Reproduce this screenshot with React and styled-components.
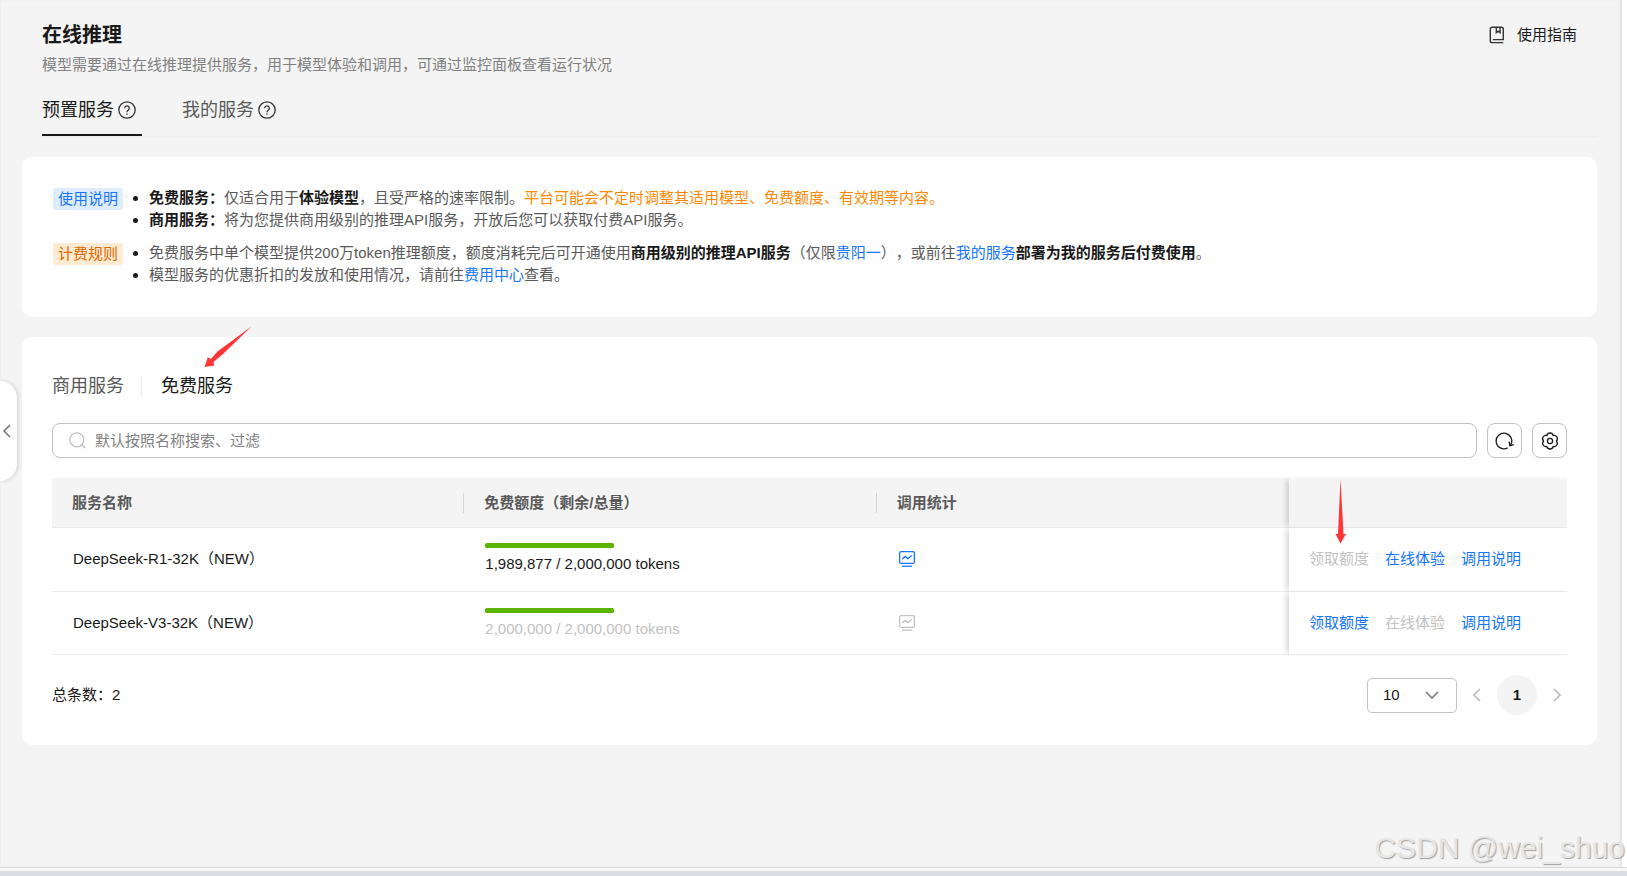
import React, { useState } from "react"
import styled, { createGlobalStyle } from "styled-components"

const GlobalStyle = createGlobalStyle`
  * {
    box-sizing: border-box;
  }

  body {
    margin: 0;
    background: #f4f4f4;
    color: #191919;
    font-family: "Liberation Sans", "Noto Sans CJK SC", sans-serif;
    font-size: 15px;
    line-height: 22px;
    text-spacing-trim: space-all;
  }

  button,
  input,
  select {
    font: inherit;
    color: inherit;
  }
`

const StyledPage = styled.div`
  position: relative;
  display: flex;
  flex-direction: column;
  min-height: 100vh;

  .body {
    flex: 1;
    display: flex;
  }
`

const Main = styled.main`
  flex: 1;
  min-width: 0;
  padding: 21px 25px 20px 21px;
  border-left: 1px solid #eeeeee;
  box-shadow: inset -3px 0 3px -1px #e2e2e2;
`

const Gutter = styled.div`
  width: 5px;
  background: #ffffff;
`

const BottomEdge = styled.div`
  height: 9px;
  border-top: 1px solid #d9d9d9;
  border-bottom: 5px solid #dcdde3;
  background: #f7f7f7;
`

const Header = styled.header`
  padding-left: 20px;

  .top {
    display: flex;
    justify-content: space-between;
    align-items: center;
    padding-right: 20px;
  }

  h1 {
    margin: 0;
    font-size: 20px;
    line-height: 28px;
  }

  p {
    margin: 5px 0 0;
    color: #808080;
  }
`

const GuideLink = styled.a`
  display: flex;
  align-items: center;
  gap: 12px;
  color: #191919;
  text-decoration: none;
`

const PageTabs = styled.nav`
  display: flex;
  gap: 40px;
  margin-top: 10px;
  border-bottom: 1px solid #eeeeee;
`

const PageTab = styled.button`
  display: flex;
  align-items: center;
  gap: 4px;
  height: 50px;
  padding: 0 6px 0 0;
  border: 0;
  border-bottom: 2px solid ${(props) => (props.$active ? "#191919" : "transparent")};
  background: none;
  color: ${(props) => (props.$active ? "#191919" : "#595959")};
  font-size: 18px;

  svg {
    color: #333333;
  }
`

const Card = styled.section`
  margin-top: 20px;
  padding: 30px 30px 31px;
  border-radius: 10px;
  background: #ffffff;

  & + & {
    padding-bottom: 30px;
  }
`

const Notice = styled.div`
  display: flex;
  align-items: flex-start;
  gap: 11px;
  padding-left: 1px;

  & + & {
    margin-top: 11px;
  }

  ul {
    margin: 0;
    padding-left: 15px;
    color: #595959;
  }

  li::marker {
    color: #191919;
  }

  strong {
    color: #191919;
  }

  .warn {
    color: #ff8800;
  }
`

const Tag = styled.span`
  flex: none;
  margin-top: 1px;
  padding: 0 5px;
  border-radius: 3px;
  color: ${(props) => (props.$tone === "blue" ? "#1476ff" : "#db6a00")};
  background: ${(props) => (props.$tone === "blue" ? "#deecff" : "#ffebd1")};
`

const TextLink = styled.a`
  color: #1476ff;
  text-decoration: none;
`

const ServiceTabs = styled.div`
  display: flex;
  align-items: center;
  height: 38px;
`

const ServiceTab = styled.button`
  padding: 0;
  border: 0;
  background: none;
  font-size: 18px;
  color: ${(props) => (props.$active ? "#191919" : "#595959")};

  & + & {
    margin-left: 17px;
    padding-left: 20px;
    background: linear-gradient(#ebebeb, #ebebeb) left / 1px 20px no-repeat;
  }
`

const Toolbar = styled.div`
  display: flex;
  gap: 10px;
  margin-top: 18px;
`

const SearchBox = styled.label`
  flex: 1;
  display: flex;
  align-items: center;
  gap: 9px;
  height: 35px;
  padding: 0 16px;
  border: 1px solid #c2c2c2;
  border-radius: 8px;

  input {
    flex: 1;
    padding: 0;
    border: 0;
    outline: 0;
    background: none;
  }

  input::placeholder {
    color: #808080;
    opacity: 1;
  }
`

const IconButton = styled.button`
  display: flex;
  align-items: center;
  justify-content: center;
  width: 35px;
  height: 35px;
  padding: 0;
  border: 1px solid #c2c2c2;
  border-radius: 8px;
  background: #ffffff;
`

const ServiceTable = styled.table`
  width: 100%;
  margin-top: 20px;
  border-collapse: separate;
  border-spacing: 0;
  table-layout: fixed;

  th,
  td {
    border-bottom: 1px solid #ebebeb;
    text-align: left;
  }

  th {
    height: 50px;
    padding: 0 20px;
    background: #f4f4f4;
    color: #595959;
  }

  th.split {
    background: linear-gradient(#d6d6d6, #d6d6d6) right / 1px 20px no-repeat #f4f4f4;
  }

  td {
    height: 64px;
    padding: 0 21px 2px;
  }

  tr:last-child td {
    height: 63px;
    padding-bottom: 0;
  }

  .actions {
    width: 278px;
    padding-left: 20px;
    padding-right: 20px;
    box-shadow: -5px 0 5px -2px rgba(0, 0, 0, 0.15);
  }

  td.actions {
    background: #ffffff;
  }
`

const Quota = styled.div`
  color: ${(props) => (props.$muted ? "#c2c2c2" : "#191919")};

  progress {
    display: block;
    width: 129px;
    height: 5px;
    margin: 1px 0 5px;
    appearance: none;
    border: 0;
  }

  progress::-webkit-progress-bar {
    border-radius: 3px;
    background: #5cb300;
  }

  progress::-webkit-progress-value {
    border-radius: 3px;
    background: #5cb300;
  }
`

const StatButton = styled.button`
  display: flex;
  padding: 0;
  border: 0;
  background: none;
  color: #1476ff;

  &:disabled {
    color: #c2c2c2;
  }
`

const Actions = styled.div`
  display: flex;
  gap: 16px;

  button {
    padding: 0;
    border: 0;
    background: none;
    color: #1476ff;
  }

  button:disabled {
    color: #c2c2c2;
  }
`

const Footer = styled.div`
  display: flex;
  justify-content: space-between;
  align-items: center;
  margin-top: 20px;
`

const Pager = styled.div`
  display: flex;
  align-items: center;
`

const PageSize = styled.label`
  display: grid;
  align-items: center;
  margin-right: 10px;

  select {
    grid-area: 1 / 1;
    width: 90px;
    height: 35px;
    padding: 0 15px;
    appearance: none;
    border: 1px solid #c2c2c2;
    border-radius: 5px;
    background: #ffffff;
  }

  svg {
    grid-area: 1 / 1;
    justify-self: end;
    margin-right: 18px;
    color: #777777;
    pointer-events: none;
  }
`

const PageButton = styled.button`
  display: flex;
  align-items: center;
  justify-content: center;
  width: ${(props) => (props.$current ? "40px" : "20px")};
  height: 40px;
  padding: 0;
  border: 0;
  border-radius: 20px;
  background: ${(props) => (props.$current ? "#f4f4f4" : "none")};
  font-weight: bold;

  & + & {
    margin-left: 10px;
  }

  svg {
    color: #bbbbbb;
  }
`

const CollapseHandle = styled.button`
  position: absolute;
  left: 0;
  top: 381px;
  display: flex;
  align-items: center;
  width: 17px;
  height: 100px;
  padding: 0 2px;
  border: 0;
  border-radius: 0 17px 17px 0;
  background: #ffffff;
  box-shadow: 1px 0 4px rgba(0, 0, 0, 0.15);
  color: #777777;
`

const Arrow = styled.svg`
  position: absolute;
  left: ${(props) => props.$left};
  top: ${(props) => props.$top};
  fill: #fe3636;
  pointer-events: none;
`

const Watermark = styled.div`
  position: absolute;
  right: 2px;
  bottom: 10px;
  color: #e6e6e6;
  font-size: 30px;
  line-height: 36px;
  text-shadow: 1px 1px 1px #a0a0a0;
  pointer-events: none;
`

const HelpIcon = () => (
  <svg width="18" height="18" viewBox="0 0 18 18" fill="none" stroke="currentColor" strokeWidth="1.3">
    <circle cx="9" cy="9" r="8.2" />
    <path d="M6.7 7.2a2.3 2.3 0 1 1 3.7 1.8c-.8.6-1.4.9-1.4 1.9v.3" />
    <path d="M9 12.4v1.3" />
  </svg>
)

const BookIcon = () => (
  <svg width="16" height="18" viewBox="0 0 16 18" fill="none" stroke="#333333" strokeWidth="1.4">
    <path d="M14.3 16.6H3.2a1.9 1.9 0 0 1-1.9-1.9V3.2c0-1.1.8-1.9 1.9-1.9h9.2c1.1 0 1.9.8 1.9 1.9v10.4H3.8" />
    <path d="M7.3 1.5v5l1.9-1.4 1.9 1.4v-5" />
  </svg>
)

const SearchIcon = () => (
  <svg width="17" height="17" viewBox="0 0 17 17" fill="none" stroke="#bfbfbf" strokeWidth="1.3">
    <circle cx="7.8" cy="7.8" r="7" />
    <path d="M12.8 12.8l3.6 3.4" />
  </svg>
)

const RefreshIcon = () => (
  <svg width="19" height="18" viewBox="0 0 19 18" fill="none" stroke="#191919" strokeWidth="1.3">
    <path d="M12.6 15.9A7.8 7.8 0 1 1 15.6 13.1" />
    <path d="M14.2 9.6l.6 4 4-.9" />
  </svg>
)

const GearIcon = () => (
  <svg width="18" height="18" viewBox="0 0 18 18" fill="none" stroke="#191919" strokeWidth="1.3">
    <path
      d="M15.4 9A3.3 3.3 0 0 0 12.2 3.5 3.3 3.3 0 0 0 5.8 3.5 3.3 3.3 0 0 0 2.6 9 3.3 3.3 0 0 0 5.8 14.5 3.3 3.3 0 0 0 12.2 14.5 3.3 3.3 0 0 0 15.4 9z"
      strokeLinejoin="round"
    />
    <circle cx="9" cy="9" r="2.6" />
  </svg>
)

const StatIcon = () => (
  <svg width="18" height="18" viewBox="0 0 18 18" fill="none" stroke="currentColor" strokeWidth="1.3">
    <rect x="1.6" y="1.6" width="14.8" height="11.8" rx="1.5" />
    <path d="M4.2 9l3-2.6 2.6 2.2 4-3.2" />
    <path d="M4 16.2h10" />
  </svg>
)

const Chevron = ({ d, width, height }) => (
  <svg width={width} height={height} viewBox={`0 0 ${width} ${height}`} fill="none" stroke="currentColor" strokeWidth="1.6">
    <path d={d} />
  </svg>
)

const services = [
  { name: "DeepSeek-R1-32K（NEW）", left: 1989877, total: 2000000, claimed: true },
  { name: "DeepSeek-V3-32K（NEW）", left: 2000000, total: 2000000, claimed: false },
]

const ServiceRow = ({ service }) => (
  <tr>
    <td>{service.name}</td>
    <td>
      <Quota $muted={!service.claimed}>
        <progress aria-label="免费额度" value={service.left} max={service.total} />
        {service.left.toLocaleString("en-US")} / {service.total.toLocaleString("en-US")} tokens
      </Quota>
    </td>
    <td>
      <StatButton aria-label="调用统计" disabled={!service.claimed}>
        <StatIcon />
      </StatButton>
    </td>
    <td className="actions">
      <Actions>
        <button disabled={service.claimed}>领取额度</button>
        <button disabled={!service.claimed}>在线体验</button>
        <button>调用说明</button>
      </Actions>
    </td>
  </tr>
)

const App = () => {
  const [pageTab, setPageTab] = useState("预置服务")
  const [serviceTab, setServiceTab] = useState("免费服务")
  const [keyword, setKeyword] = useState("")

  const mappedServices = services
    .filter((service) => service.name.toLowerCase().includes(keyword.toLowerCase()))
    .map((service) => <ServiceRow key={service.name} service={service} />)

  return (
    <StyledPage lang="zh-CN">
      <GlobalStyle />
      <div className="body">
        <Main>
          <Header>
            <div className="top">
              <h1>在线推理</h1>
              <GuideLink href="#guide">
                <BookIcon />
                使用指南
              </GuideLink>
            </div>
            <p>模型需要通过在线推理提供服务，用于模型体验和调用，可通过监控面板查看运行状况</p>
            <PageTabs>
              {["预置服务", "我的服务"].map((tab) => (
                <PageTab key={tab} $active={tab === pageTab} onClick={() => setPageTab(tab)}>
                  {tab}
                  <HelpIcon />
                </PageTab>
              ))}
            </PageTabs>
          </Header>

          <Card>
            <Notice>
              <Tag $tone="blue">使用说明</Tag>
              <ul>
                <li>
                  <strong>免费服务：</strong>仅适合用于<strong>体验模型</strong>，且受严格的速率限制。
                  <span className="warn">平台可能会不定时调整其适用模型、免费额度、有效期等内容。</span>
                </li>
                <li>
                  <strong>商用服务：</strong>将为您提供商用级别的推理API服务，开放后您可以获取付费API服务。
                </li>
              </ul>
            </Notice>
            <Notice>
              <Tag $tone="orange">计费规则</Tag>
              <ul>
                <li>
                  免费服务中单个模型提供200万token推理额度，额度消耗完后可开通使用
                  <strong>商用级别的推理API服务</strong>（仅限<TextLink href="#region">贵阳一</TextLink>
                  ），或前往<TextLink href="#mine">我的服务</TextLink>
                  <strong>部署为我的服务后付费使用</strong>。
                </li>
                <li>
                  模型服务的优惠折扣的发放和使用情况，请前往<TextLink href="#billing">费用中心</TextLink>查看。
                </li>
              </ul>
            </Notice>
          </Card>

          <Card>
            <ServiceTabs>
              {["商用服务", "免费服务"].map((tab) => (
                <ServiceTab key={tab} $active={tab === serviceTab} onClick={() => setServiceTab(tab)}>
                  {tab}
                </ServiceTab>
              ))}
            </ServiceTabs>
            <Toolbar>
              <SearchBox>
                <SearchIcon />
                <input
                  aria-label="搜索"
                  placeholder="默认按照名称搜索、过滤"
                  value={keyword}
                  onChange={(e) => setKeyword(e.target.value)}
                />
              </SearchBox>
              <IconButton aria-label="刷新">
                <RefreshIcon />
              </IconButton>
              <IconButton aria-label="设置">
                <GearIcon />
              </IconButton>
            </Toolbar>
            <ServiceTable>
              <thead>
                <tr>
                  <th className="split">服务名称</th>
                  <th className="split">免费额度（剩余/总量）</th>
                  <th>调用统计</th>
                  <th className="actions" aria-label="操作"></th>
                </tr>
              </thead>
              <tbody>{mappedServices}</tbody>
            </ServiceTable>
            <Footer>
              <div>总条数：{mappedServices.length}</div>
              <Pager>
                <PageSize>
                  <select aria-label="每页条数" defaultValue="10">
                    <option>10</option>
                    <option>20</option>
                    <option>50</option>
                  </select>
                  <Chevron width={14} height={8} d="M1 1l6 6 6-6" />
                </PageSize>
                <PageButton aria-label="上一页">
                  <Chevron width={8} height={14} d="M7 1L1 7l6 6" />
                </PageButton>
                <PageButton $current>1</PageButton>
                <PageButton aria-label="下一页">
                  <Chevron width={8} height={14} d="M1 1l6 6-6 6" />
                </PageButton>
              </Pager>
            </Footer>
          </Card>
        </Main>
        <Gutter />
      </div>
      <BottomEdge />

      <CollapseHandle aria-label="收起">
        <Chevron width={10} height={14} d="M8 1L2 7l6 6" />
      </CollapseHandle>
      <Arrow $left="204px" $top="326px" width="48" height="42" viewBox="0 0 48 42">
        <path d="M47.5 .5L14 25 7 32.8 3.7 31.5 .5 41l9.8-1.5-.8-3.6L19 28z" />
      </Arrow>
      <Arrow $left="1335px" $top="479px" width="12" height="65" viewBox="0 0 12 65">
        <path d="M5.5 0L3 55H.5l5 9.5L11 55H8.5z" />
      </Arrow>
      <Watermark>CSDN @wei_shuo</Watermark>
    </StyledPage>
  )
}

export default App
